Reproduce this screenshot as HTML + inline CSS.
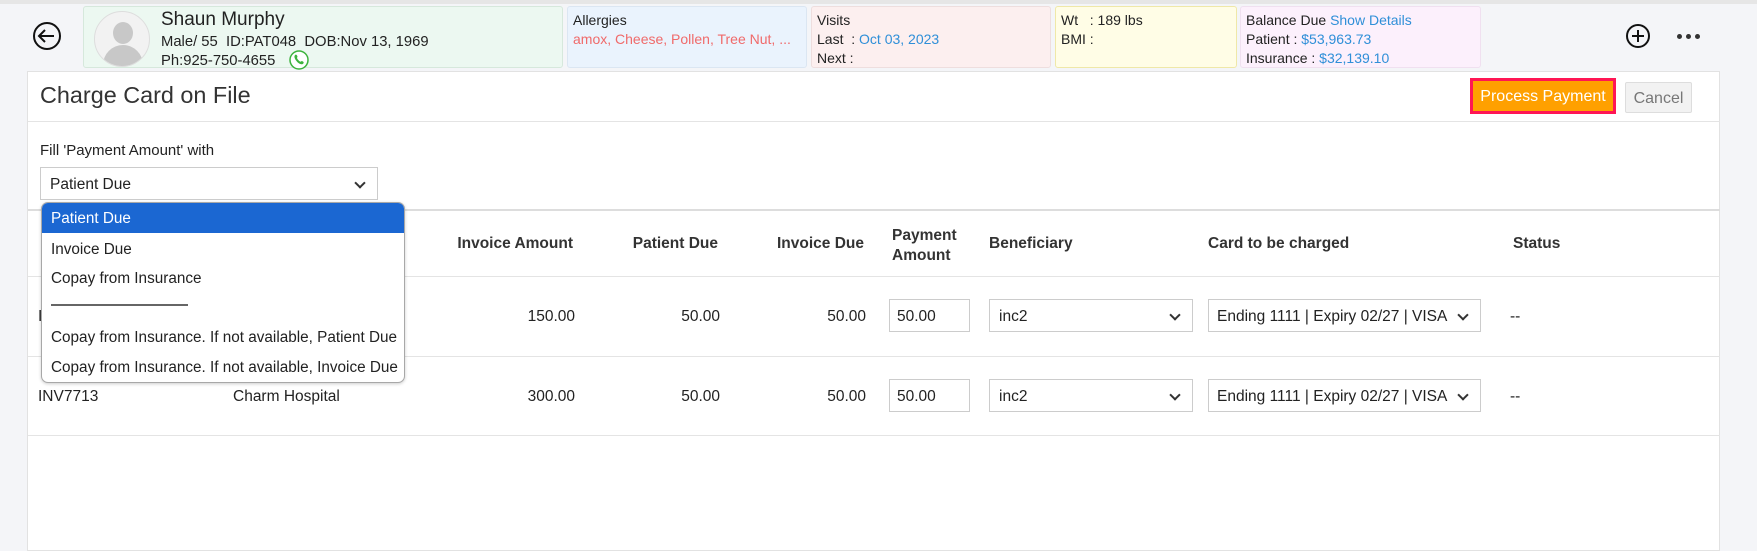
<!DOCTYPE html>
<html><head><meta charset="utf-8"><style>
*{box-sizing:border-box;margin:0;padding:0}
body{width:1757px;height:545px;overflow:hidden;background:#f4f5f8;font-family:"Liberation Sans",sans-serif;font-size:15.5px;color:#222;position:relative}
.a{position:absolute;white-space:nowrap}
.box{position:absolute;top:6px;height:62px;border:1px solid #e2e2e2;border-radius:3px;padding:4px 5px;line-height:19px;font-size:14px}
.blue{color:#2f8fd8}
.sel,.inp{position:absolute;border:1px solid #ccc;background:#fff;height:33px;padding-left:9px;line-height:33px;font-size:15.5px}
.sel:after{content:"";position:absolute;right:13px;top:11px;width:6px;height:6px;border-right:2px solid #333;border-bottom:2px solid #333;transform:rotate(45deg)}
.th{font-weight:bold;color:#333;font-size:15.5px}
.hl{position:absolute;left:28px;width:1692px;height:1px;background:#e4e4e4}
</style></head><body>
<div class="a" style="left:0;top:0;width:1757px;height:4px;background:#e6e6e6"></div>
<svg class="a" style="left:32px;top:21px" width="30" height="30" viewBox="0 0 30 30"><circle cx="15" cy="15" r="13" fill="none" stroke="#111" stroke-width="2"/><path d="M22 15H8M13 9l-6 6 6 6" fill="none" stroke="#111" stroke-width="2"/></svg>
<div class="box" style="left:83px;width:480px;background:#ecf8f1;border-color:#d6e8dc;padding:0">
<div class="a" style="left:10px;top:4px;width:56px;height:56px;border-radius:50%;background:#f2f2f2;border:1px solid #ddd;overflow:hidden">
<div class="a" style="left:18px;top:10px;width:20px;height:22px;border-radius:50%;background:#c8c8c8"></div>
<div class="a" style="left:8px;top:33px;width:40px;height:30px;border-radius:20px 20px 0 0;background:#c8c8c8"></div></div>
<div class="a" style="left:77px;top:3px;font-size:19px;line-height:20px">Shaun Murphy</div>
<div class="a" style="left:77px;top:26px;font-size:14.8px">Male/ 55&nbsp; ID:PAT048&nbsp; DOB:Nov 13, 1969</div>
<div class="a" style="left:77px;top:45px;font-size:14.8px">Ph:925-750-4655</div>
<svg class="a" style="left:205px;top:43px" width="20" height="20" viewBox="0 0 20 20"><circle cx="10" cy="10" r="9" fill="#fff" stroke="#3db33d" stroke-width="1.5"/><path d="M6 5c1-1 2 0 2.5 1.5L8 8c.5 1.5 2 3 3.5 3.8l1.3-.8c1.5.5 2.5 1.3 1.5 2.5-1 1.2-3 1-5-.6S5 8 5.5 6z" fill="#3db33d"/></svg>
</div>
<div class="box" style="left:567px;width:240px;background:#eaf3fd;border-color:#dbe6f2">Allergies<br><span style="color:#f06a6a">amox, Cheese, Pollen, Tree Nut, ...</span></div>
<div class="box" style="left:811px;width:240px;background:#fcefef;border-color:#eedede">Visits<br>Last &nbsp;: <span class="blue">Oct 03, 2023</span><br>Next :</div>
<div class="box" style="left:1055px;width:182px;background:#fffde6;border-color:#efe8a8">Wt &nbsp;&nbsp;: 189 lbs<br>BMI :</div>
<div class="box" style="left:1240px;width:241px;background:#fcf0fc;border-color:#f0e0f0">Balance Due <span class="blue">Show Details</span><br>Patient : <span class="blue">$53,963.73</span><br>Insurance : <span class="blue">$32,139.10</span></div>
<svg class="a" style="left:1625px;top:23px" width="26" height="26" viewBox="0 0 26 26"><circle cx="13" cy="13" r="11" fill="none" stroke="#111" stroke-width="2"/><path d="M13 7v12M7 13h12" stroke="#111" stroke-width="2"/></svg>
<div class="a" style="left:1677px;top:34px;width:5px;height:5px;border-radius:50%;background:#333;box-shadow:9px 0 #333,18px 0 #333"></div>

<div class="a" style="left:27px;top:71px;width:1693px;height:480px;background:#fff;border:1px solid #e2e2e2"></div>
<div class="a" style="left:40px;top:82px;font-size:23.4px;color:#333">Charge Card on File</div>
<div class="hl" style="top:121px"></div>
<div class="a" style="left:1470px;top:78px;width:146px;height:36px;background:#ffa000;border:3px solid #ff1654;color:#fff;font-size:16px;text-align:center;line-height:32px">Process Payment</div>
<div class="a" style="left:1625px;top:82px;width:67px;height:31px;background:#f2f2f2;border:1px solid #ddd;border-radius:2px;color:#777;font-size:16px;text-align:center;line-height:31px">Cancel</div>
<div class="a" style="left:40px;top:142px;font-size:15px">Fill 'Payment Amount' with</div>
<div class="sel" style="left:40px;top:167px;width:338px">Patient Due</div>
<div class="a" style="left:28px;top:209px;width:1692px;height:2px;background:#ddd"></div>
<div class="hl" style="top:276px"></div>
<div class="hl" style="top:356px"></div>
<div class="hl" style="top:435px"></div>
<div class="a th" style="left:433px;width:140px;text-align:right;top:235px">Invoice Amount</div>
<div class="a th" style="left:598px;width:120px;text-align:right;top:235px">Patient Due</div>
<div class="a th" style="left:744px;width:120px;text-align:right;top:235px">Invoice Due</div>
<div class="a th" style="left:892px;top:226px;line-height:20px">Payment<br>Amount</div>
<div class="a th" style="left:989px;top:235px">Beneficiary</div>
<div class="a th" style="left:1208px;top:235px">Card to be charged</div>
<div class="a th" style="left:1513px;top:235px">Status</div>

<div class="a" style="left:38px;top:308px">INV7712</div>
<div class="a" style="left:475px;width:100px;text-align:right;top:308px">150.00</div>
<div class="a" style="left:620px;width:100px;text-align:right;top:308px">50.00</div>
<div class="a" style="left:766px;width:100px;text-align:right;top:308px">50.00</div>
<div class="inp" style="left:889px;top:299px;width:81px;padding-left:7px">50.00</div>
<div class="sel" style="left:989px;top:299px;width:204px">inc2</div>
<div class="sel" style="left:1208px;top:299px;width:273px;padding-left:8px">Ending 1111 | Expiry 02/27 | VISA</div>
<div class="a" style="left:1510px;top:308px">--</div>

<div class="a" style="left:38px;top:388px">INV7713</div>
<div class="a" style="left:233px;top:388px">Charm Hospital</div>
<div class="a" style="left:475px;width:100px;text-align:right;top:388px">300.00</div>
<div class="a" style="left:620px;width:100px;text-align:right;top:388px">50.00</div>
<div class="a" style="left:766px;width:100px;text-align:right;top:388px">50.00</div>
<div class="inp" style="left:889px;top:379px;width:81px;padding-left:7px">50.00</div>
<div class="sel" style="left:989px;top:379px;width:204px">inc2</div>
<div class="sel" style="left:1208px;top:379px;width:273px;padding-left:8px">Ending 1111 | Expiry 02/27 | VISA</div>
<div class="a" style="left:1510px;top:388px">--</div>

<div class="a" style="left:41px;top:202px;width:364px;height:181px;background:#fff;border:1px solid #a8a8a8;border-radius:7px;overflow:hidden;box-shadow:0 1px 3px rgba(0,0,0,.2);font-size:15.3px">
<div class="a" style="left:0;top:0;width:364px;height:30px;background:#1b67d2"></div>
<div class="a" style="left:9px;top:7px;color:#fff">Patient Due</div>
<div class="a" style="left:9px;top:38px">Invoice Due</div>
<div class="a" style="left:9px;top:67px">Copay from Insurance</div>
<div class="a" style="left:9px;top:101px;width:137px;height:2px;background:#666"></div>
<div class="a" style="left:9px;top:126px">Copay from Insurance. If not available, Patient Due</div>
<div class="a" style="left:9px;top:156px">Copay from Insurance. If not available, Invoice Due</div>
</div>
</body></html>
